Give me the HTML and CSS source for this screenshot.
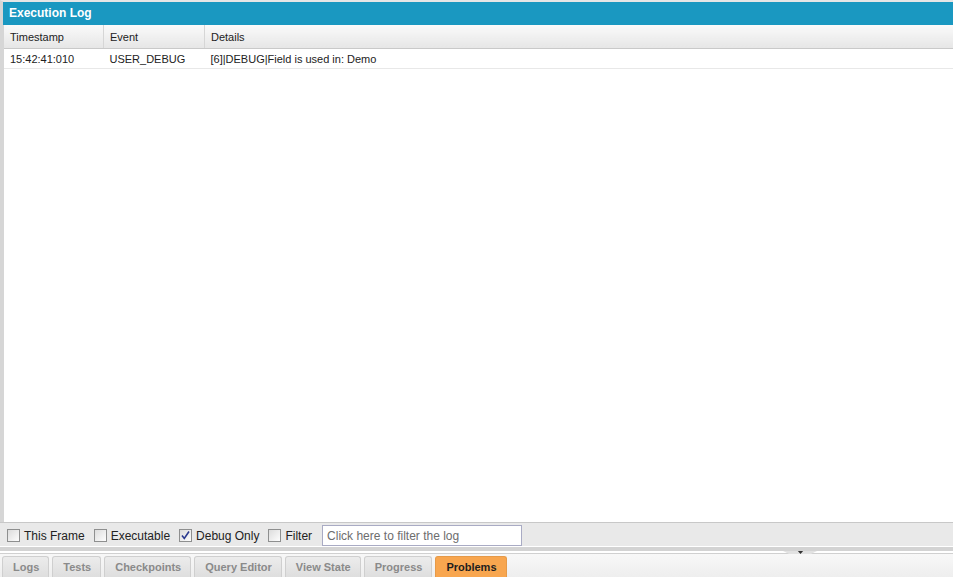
FILE: index.html
```html
<html>
    <head>
        <title>Execution Log</title>
        <link rel="stylesheet" href="styles.css">
    </head>
    <body>
        <div class="app">
            <div class="panel">
                <header class="title">Execution Log</header>
                <table class="log">
                    <thead>
                        <tr>
                            <th class="c-time">Timestamp</th>
                            <th class="c-event">Event</th>
                            <th>Details</th>
                        </tr>
                    </thead>
                    <tbody>
                        <tr>
                            <td>15:42:41:010</td>
                            <td>USER_DEBUG</td>
                            <td>[6]|DEBUG|Field is used in: Demo</td>
                        </tr>
                    </tbody>
                </table>
            </div>

            <div class="toolbar">
                <label class="opt"><span class="box"></span>This Frame</label>
                <label class="opt"><span class="box"></span>Executable</label>
                <label class="opt"><span class="box checked">
                    <svg width="11" height="11" viewBox="0 0 11 11"><path d="M2 5.5 L4.3 8.5 L9 1.5" fill="none" stroke="#2b3a8f" stroke-width="1.6"/></svg>
                </span>Debug Only</label>
                <label class="opt"><span class="box"></span>Filter</label>
                <input class="filter" type="text" placeholder="Click here to filter the log">
            </div>

            <div class="splitter">
                <div class="grip">
                    <svg width="7" height="4" viewBox="0 0 7 4"><path d="M0 0 H7 L3.5 4 Z" fill="#333"/></svg>
                </div>
            </div>

            <div class="tabs">
                <div class="tab">Logs</div>
                <div class="tab">Tests</div>
                <div class="tab">Checkpoints</div>
                <div class="tab">Query Editor</div>
                <div class="tab">View State</div>
                <div class="tab">Progress</div>
                <div class="tab active">Problems</div>
            </div>
        </div>
    </body>
</html>
```

FILE: styles.css
```css
body{
    margin: 0;
    width: 953px;
    height: 577px;
    overflow: hidden;
    background: #fff;
    font-family: "Liberation Sans", Arial, sans-serif;
}
.app{
    display: flex;
    flex-direction: column;
    height: 577px;
}
.panel{
    flex: 1;
    border-top: 2px solid #e6e6e6;
    border-left: 4px solid #d6d6d6;
    background: #fff;
}
.title{
    height: 23px;
    line-height: 23px;
    margin-left: -1px;
    padding-left: 6px;
    background: #1a98c1;
    color: #fff;
    font-size: 12px;
    font-weight: bold;
}
.log{
    width: 100%;
    border-collapse: collapse;
    font-size: 11px;
    color: #222;
}
.log th{
    height: 23px;
    padding: 1px 6px 0;
    text-align: left;
    font-weight: normal;
    background: linear-gradient(#fafafa, #e6e6e6);
    border-bottom: 1px solid #c9c9c9;
    border-right: 1px solid #d6d6d6;
}
.log th:last-child{
    border-right: none;
}
.c-time{
    width: 87px;
}
.c-event{
    width: 88px;
}
.log td{
    height: 20px;
    padding: 1px 6px 0;
    border-bottom: 1px solid #e8e8e8;
}
.toolbar{
    display: flex;
    align-items: center;
    height: 24px;
    padding-left: 7px;
    padding-top: 2px;
    box-sizing: border-box;
    border-top: 1px solid #c8c8c8;
    background: #e9e9e9;
    font-size: 12px;
    color: #222;
}
.opt{
    display: flex;
    align-items: center;
    margin-right: 9px;
}
.box{
    display: flex;
    align-items: center;
    justify-content: center;
    width: 11px;
    height: 11px;
    margin-right: 4px;
    border: 1px solid #8e8f8f;
    background: linear-gradient(135deg, #dcdcdc, #fdfdfd);
}
.filter{
    width: 200px;
    height: 21px;
    margin-left: 1px;
    padding: 0 4px;
    border: 1px solid #a9abc4;
    font-family: "Liberation Sans", Arial, sans-serif;
    font-size: 12px;
    color: #333;
    outline: none;
}
.filter::placeholder{
    color: #6d6d6d;
}
.splitter{
    position: relative;
    height: 4px;
    margin-top: 1px;
    background: #d3d3d3;
}
.grip{
    position: absolute;
    left: 783px;
    top: 4px;
    width: 34px;
    height: 3px;
    background: #e2e2e2;
    clip-path: polygon(0 0, 100% 0, 82% 100%, 18% 100%);
    display: flex;
    justify-content: center;
}
.grip svg{
    display: block;
    margin-top: -1px;
}
.tabs{
    display: flex;
    align-items: flex-end;
    gap: 3px;
    height: 23px;
    margin-top: 2px;
    padding-left: 2px;
    border-top: 1px solid #d0d0d0;
    background: linear-gradient(#f8f8f8, #eeeeee);
}
.tab{
    height: 20px;
    line-height: 21px;
    padding: 0 9px 0 10px;
    border: 1px solid #cfcfcf;
    border-bottom: none;
    border-radius: 3px 3px 0 0;
    background: linear-gradient(#ececec, #dedede);
    color: #8a8a8a;
    font-size: 11px;
    font-weight: bold;
}
.tab.active{
    background: #f8a64f;
    border-color: #e69a49;
    color: #1e1e1e;
}
```
